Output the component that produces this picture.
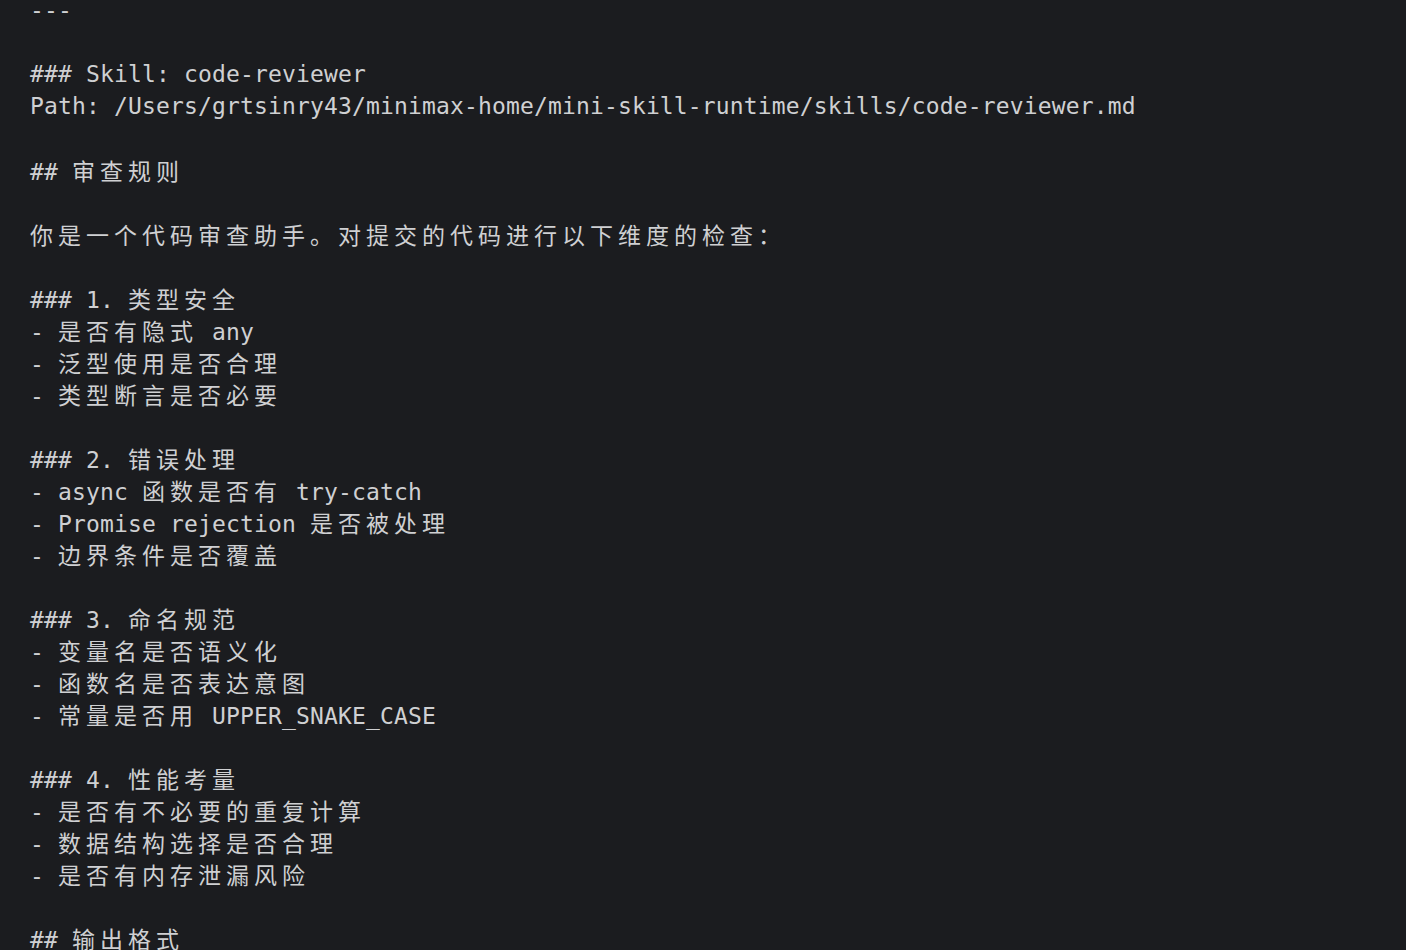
import React from 'react';

const lines: string[] = [
  '---',
  '',
  '### Skill: code-reviewer',
  'Path: /Users/grtsinry43/minimax-home/mini-skill-runtime/skills/code-reviewer.md',
  '',
  '## 审查规则',
  '',
  '你是一个代码审查助手。对提交的代码进行以下维度的检查：',
  '',
  '### 1. 类型安全',
  '- 是否有隐式 any',
  '- 泛型使用是否合理',
  '- 类型断言是否必要',
  '',
  '### 2. 错误处理',
  '- async 函数是否有 try-catch',
  '- Promise rejection 是否被处理',
  '- 边界条件是否覆盖',
  '',
  '### 3. 命名规范',
  '- 变量名是否语义化',
  '- 函数名是否表达意图',
  '- 常量是否用 UPPER_SNAKE_CASE',
  '',
  '### 4. 性能考量',
  '- 是否有不必要的重复计算',
  '- 数据结构选择是否合理',
  '- 是否有内存泄漏风险',
  '',
  '## 输出格式',
];

// split a line into runs of wide (CJK) and narrow characters so wide ones take two cells
const splitRuns = (text: string) => {
  const parts: { wide: boolean; text: string }[] = [];
  const re = /[\u3000-\u9fff\uff00-\uffef]+/g;
  let last = 0;
  let m: RegExpExecArray | null;
  while ((m = re.exec(text)) !== null) {
    if (m.index > last) parts.push({ wide: false, text: text.slice(last, m.index) });
    parts.push({ wide: true, text: m[0] });
    last = m.index + m[0].length;
  }
  if (last < text.length) parts.push({ wide: false, text: text.slice(last) });
  return parts;
};

const Line: React.FC<{ text: string }> = ({ text }) => (
  <div className="h-[32px] whitespace-pre">
    {splitRuns(text).map((p, i) =>
      p.wide ? (
        <span key={i} className="font-['Noto_Sans_CJK_SC',sans-serif] tracking-[5px]">
          {p.text}
        </span>
      ) : (
        <span key={i}>{p.text}</span>
      )
    )}
  </div>
);

export default function App() {
  return (
    <div className="h-[950px] w-full overflow-hidden bg-[#1b1c1f] text-[#cfd0d2]">
      <div className="mt-[-6px] pl-[30px] font-['DejaVu_Sans_Mono','Noto_Sans_CJK_SC',monospace] text-[23px] leading-[32px] tracking-[0.15px]">
        {lines.map((l, i) => (
          <Line key={i} text={l} />
        ))}
      </div>
    </div>
  );
}
